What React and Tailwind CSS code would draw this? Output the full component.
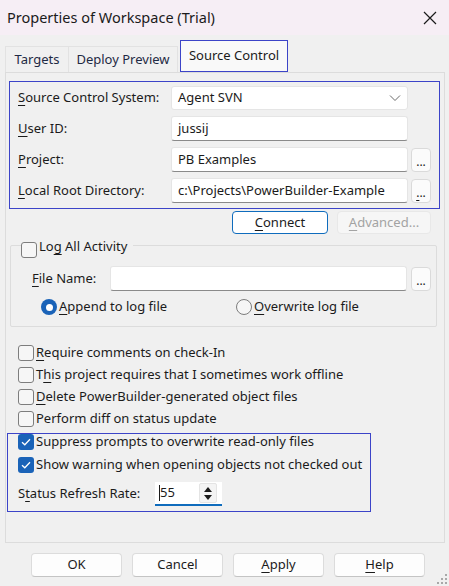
import React from 'react';

const U = ({ children }) => <span className="underline underline-offset-[3px] decoration-1">{children}</span>;

const Check = ({ checked }) =>
    checked ? (
        <span className="w-4 h-4 shrink-0 rounded-[3px] bg-[#1a63b8] flex items-center justify-center">
            <svg width="10" height="8" viewBox="0 0 10 8" fill="none">
                <path d="M1 4.2 L3.8 6.8 L9 1.2" stroke="white" strokeWidth="1.3" />
            </svg>
        </span>
    ) : (
        <span className="w-4 h-4 shrink-0 rounded-[3px] border border-[#7d7d7d] bg-[#f6f6f6]" />
    );

const Radio = ({ checked }) =>
    checked ? (
        <span className="w-4 h-4 shrink-0 rounded-full bg-[#1a63b8] flex items-center justify-center">
            <span className="w-[7px] h-[7px] rounded-full bg-white" />
        </span>
    ) : (
        <span className="w-4 h-4 shrink-0 rounded-full border border-[#7d7d7d] bg-[#f6f6f6]" />
    );

const Field = ({ value, className = '' }) => (
    <div className={`h-[25px] bg-white rounded-[3px] border border-[#e5e5e5] border-b-[#8a8a8a] flex items-center px-[6px] text-[#1b1b1b] whitespace-nowrap overflow-hidden ${className}`}>
        {value}
    </div>
);

const Dots = ({ first }) => (
    <div className="w-[20px] h-[24px] rounded-[4px] border border-[#dadada] bg-[#fbfbfb] flex items-end justify-center pb-[3px] text-[12px] leading-none text-[#1b1b1b]">
        {first ? <span><U>.</U>..</span> : '...'}
    </div>
);

const Btn = ({ children, className = '' }) => (
    <div className={`h-[24px] rounded-[4px] border border-[#dcdcdc] border-b-[#c4c4c4] bg-[#fdfdfd] flex items-center justify-center text-[#1b1b1b] ${className}`}>
        {children}
    </div>
);

const CheckRow = ({ checked, children }) => (
    <div className="h-[22px] flex items-center gap-[2px] pl-[12px] whitespace-nowrap">
        <Check checked={checked} />
        <span>{children}</span>
    </div>
);

export default function App() {
    return (
        <div className="w-[449px] h-[586px] bg-[#f0f0f0] font-['Noto_Sans',sans-serif] text-[13px] text-[#1b1b1b] relative overflow-hidden">
            {/* Title bar */}
            <div className="h-[35px] bg-[#f6eef5] flex items-center justify-between pl-[7px] pr-[12px]">
                <span className="text-[14.5px]">Properties of Workspace (Trial)</span>
                <svg width="14" height="14" viewBox="0 0 14 14">
                    <path d="M1 1 L13 13 M13 1 L1 13" stroke="#1b1b1b" strokeWidth="1.2" />
                </svg>
            </div>

            <div className="px-[5px]">
                {/* Tabs */}
                <div className="h-[37px] flex items-end">
                    <div className="h-[26px] w-[64px] border border-b-0 border-[#e2e2e2] flex items-center justify-center text-[#1f2a44]">Targets</div>
                    <div className="h-[26px] w-[109px] border border-b-0 border-l-0 border-[#e2e2e2] flex items-center justify-center text-[#1f2a44]">Deploy Preview</div>
                    <div className="h-[32px] w-[108px] ml-[2px] border border-[#3c44c8] bg-[#f9f9f9] flex items-center justify-center pb-[1px]">Source Control</div>
                </div>

                {/* Panel */}
                <div className="w-[440px] h-[471px] border border-[#dcdcdc] bg-[#f0f0f0] flex flex-col">
                    {/* Connection settings */}
                    <div className="ml-[3px] mt-[8px] w-[431px] h-[128px] border border-[#3c44c8] pt-[4px] pl-[8px] flex flex-col gap-[6px]">
                        <div className="flex items-center">
                            <span className="w-[153px]"><U>S</U>ource Control System:</span>
                            <div className="w-[237px] h-[24px] bg-white rounded-[3px] border border-[#e5e5e5] flex items-center justify-between px-[6px]">
                                <span>Agent SVN</span>
                                <svg width="12" height="8" viewBox="0 0 12 8">
                                    <path d="M1 1.5 L6 6.5 L11 1.5" stroke="#6a6a6a" fill="none" strokeWidth="1" />
                                </svg>
                            </div>
                        </div>
                        <div className="flex items-center">
                            <span className="w-[153px]"><U>U</U>ser ID:</span>
                            <Field value="jussij" className="w-[237px]" />
                        </div>
                        <div className="flex items-center">
                            <span className="w-[153px]"><U>P</U>roject:</span>
                            <Field value="PB Examples" className="w-[237px]" />
                            <div className="ml-[3px]"><Dots /></div>
                        </div>
                        <div className="flex items-center">
                            <span className="w-[153px]"><U>L</U>ocal Root Directory:</span>
                            <Field value="c:\Projects\PowerBuilder-Example" className="w-[237px]" />
                            <div className="ml-[3px]"><Dots first /></div>
                        </div>
                    </div>

                    {/* Connect / Advanced */}
                    <div className="mt-[2px] flex gap-[9px] pl-[226px]">
                        <div className="w-[96px] h-[23px] rounded-[4px] border border-[#0f6cbd] bg-white flex items-center justify-center"><U>C</U>onnect</div>
                        <div className="w-[94px] h-[23px] rounded-[4px] border border-[#e8e8e8] bg-[#f6f6f6] flex items-center justify-center text-[#a3a3a3]"><U>A</U>dvanced...</div>
                    </div>

                    {/* Log group */}
                    <div className="ml-[4px] mt-[11px] w-[427px] h-[82px] border border-[#dcdcdc] rounded-[2px]">
                        <div className="-mt-[4px] ml-[10px] h-[16px] flex items-start w-fit bg-[#f0f0f0] pr-[6px]">
                            <Check />
                            <span className="ml-[2px] -mt-[5px]">Lo<U>g</U> All Activity</span>
                        </div>
                        <div className="mt-[8px] flex items-center">
                            <span className="pl-[21px] w-[99px]"><U>F</U>ile Name:</span>
                            <Field value="" className="w-[297px] h-[24px]" />
                            <div className="ml-[4px]"><Dots /></div>
                        </div>
                        <div className="mt-[8px] h-[16px] flex items-center">
                            <div className="pl-[30px] w-[225px] flex items-center gap-[2px]">
                                <Radio checked />
                                <span><U>A</U>ppend to log file</span>
                            </div>
                            <div className="flex items-center gap-[2px]">
                                <Radio />
                                <span><U>O</U>verwrite log file</span>
                            </div>
                        </div>
                    </div>

                    {/* Options */}
                    <div className="mt-[15px]">
                        <CheckRow><U>R</U>equire comments on check-In</CheckRow>
                        <CheckRow>T<U>h</U>is project requires that I sometimes work offline</CheckRow>
                        <CheckRow><U>D</U>elete PowerBuilder-generated object files</CheckRow>
                        <CheckRow>Perform diff on status update</CheckRow>
                    </div>

                    <div className="ml-[1px] mt-[3px] w-[364px] h-[79px] border border-[#3c44c8] flex flex-col whitespace-nowrap">
                        <div className="-mt-[3px] h-[22px] flex items-center gap-[2px] pl-[10px]">
                            <Check checked />
                            <span>Suppress prompts to overwrite read-only files</span>
                        </div>
                        <div className="h-[24px] flex items-center gap-[2px] pl-[10px]">
                            <Check checked />
                            <span>Show warning when opening objects not checked out</span>
                        </div>
                        <div className="mt-[5px] flex items-center pl-[10px]">
                            <span className="w-[137px]">S<U>t</U>atus Refresh Rate:</span>
                            <div className="w-[67px] h-[24px] bg-white border-b-2 border-[#0f6cbd] flex items-center justify-between pl-[4px] pr-[5px]">
                                <span className="flex items-center"><span className="w-px h-[16px] bg-[#1b1b1b]" />55</span>
                                <div className="w-[18px] h-[20px] flex flex-col items-center justify-center gap-[3px] bg-[#f4f4f4] border border-[#e4e4e4] rounded-[2px]">
                                    <svg width="8" height="5" viewBox="0 0 8 5"><path d="M0 5 L4 0 L8 5 Z" fill="#1b1b1b" /></svg>
                                    <svg width="8" height="5" viewBox="0 0 8 5"><path d="M0 0 L4 5 L8 0 Z" fill="#1b1b1b" /></svg>
                                </div>
                            </div>
                        </div>
                    </div>
                </div>

                {/* Dialog buttons */}
                <div className="mt-[10px] flex gap-[10px] pl-[26px]">
                    <Btn className="w-[91px]">OK</Btn>
                    <Btn className="w-[91px]">Cancel</Btn>
                    <Btn className="w-[91px]"><U>A</U>pply</Btn>
                    <Btn className="w-[91px]"><U>H</U>elp</Btn>
                </div>
            </div>

            {/* Resize grip */}
            <svg className="absolute right-[2px] bottom-[2px]" width="10" height="10" viewBox="0 0 10 10">
                <rect x="8" y="0" width="2" height="2" fill="#a8a8a8" />
                <rect x="4" y="4" width="2" height="2" fill="#a8a8a8" />
                <rect x="8" y="4" width="2" height="2" fill="#a8a8a8" />
                <rect x="0" y="8" width="2" height="2" fill="#a8a8a8" />
                <rect x="4" y="8" width="2" height="2" fill="#a8a8a8" />
                <rect x="8" y="8" width="2" height="2" fill="#a8a8a8" />
            </svg>
        </div>
    );
}
